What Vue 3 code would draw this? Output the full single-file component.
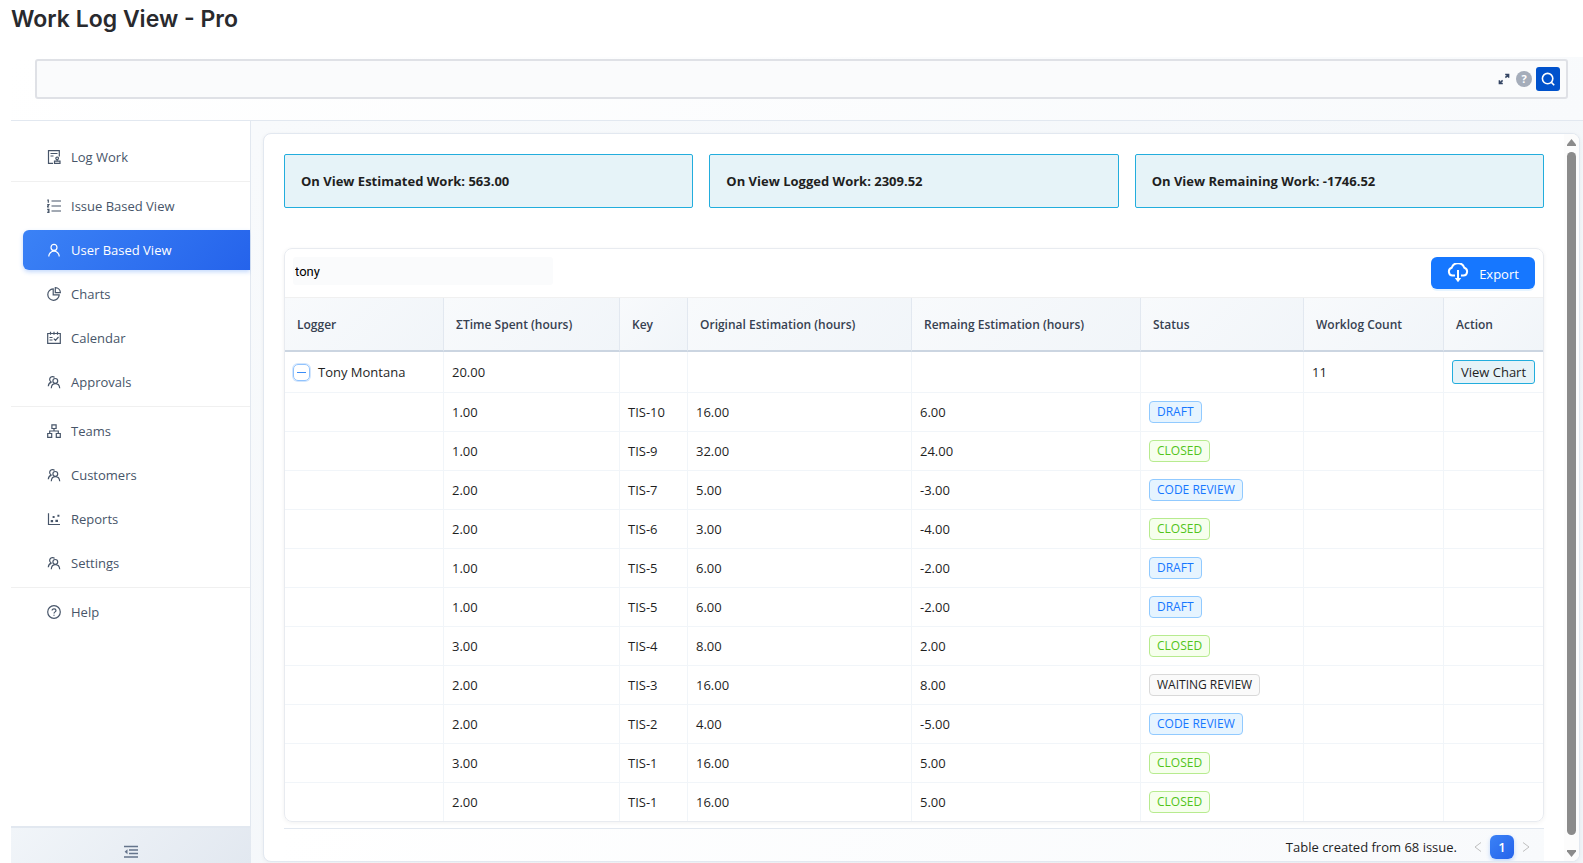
<template>
  <div class="page">
    <h1>Work Log View - Pro</h1>

    <header class="topbar">
      <div class="query">
        <input v-model="query" class="query-input" type="text" aria-label="Query" />
        <button class="query-expand" aria-label="Expand">
          <svg viewBox="0 0 12 12" width="12" height="12">
            <path d="M7.4 4.6 10 2M7.2 1.4h3.4v3.4M4.6 7.4 2 10M1.4 7.2v3.4h3.4" />
          </svg>
        </button>
        <a class="query-help" href="#" aria-label="Syntax help">?</a>
        <button class="query-search" aria-label="Search">
          <svg viewBox="0 0 16 16" width="16" height="16">
            <circle cx="7.6" cy="7.6" r="5.2" />
            <path d="m11.4 11.4 2.8 2.8" />
          </svg>
        </button>
      </div>
    </header>

    <div class="body">
      <aside class="sidebar">
        <nav class="menu">
          <div v-for="(group, g) in menu" :key="g" class="menu-group">
            <a
              v-for="item in group"
              :key="item.label"
              href="#"
              class="menu-item"
              :class="{ active: item.label === active }"
              @click.prevent="active = item.label"
            >
              <svg class="icon" viewBox="0 0 14 14" width="14" height="14">
                <path :d="icons[item.icon]" />
              </svg>
              <span>{{ item.label }}</span>
            </a>
          </div>
        </nav>
        <button class="collapse" aria-label="Collapse menu">
          <svg viewBox="0 0 14 14" width="14" height="14">
            <path d="M0 1.5h14M5 5h9M5 8.5h9M0 12h14" />
            <path class="solid" d="M3.5 4.3v5L.6 6.8z" />
          </svg>
        </button>
      </aside>

      <main class="content">
        <section class="panel">
          <div class="panel-main">
            <div class="stats">
              <div v-for="stat in stats" :key="stat.label" class="stat">{{ stat.label }}: {{ stat.value }}</div>
            </div>

            <div class="table-box">
              <div class="table-title">
                <input v-model="search" class="filter" type="text" aria-label="Filter loggers" />
                <button class="export">
                  <svg viewBox="0 0 22 20" width="22" height="20">
                    <path d="M8 12.6H5.6a4 4 0 0 1-.9-7.8 6.6 6.6 0 0 1 12.6 0 4 4 0 0 1-.9 7.8H14" />
                    <path d="M11 7v9" />
                    <path class="solid" d="M7.8 15h6.4L11 19.2z" />
                  </svg>
                  <span>Export</span>
                </button>
              </div>

              <table>
                <colgroup>
                  <col class="col-logger" />
                  <col class="col-spent" />
                  <col class="col-key" />
                  <col class="col-original" />
                  <col class="col-remaining" />
                  <col class="col-status" />
                  <col class="col-count" />
                  <col class="col-action" />
                </colgroup>
                <thead>
                  <tr>
                    <th v-for="column in columns" :key="column">{{ column }}</th>
                  </tr>
                </thead>
                <tbody>
                  <tr class="parent">
                    <td>
                      <div class="logger">
                        <button class="toggle" aria-label="Toggle rows" @click="expanded = !expanded"></button>
                        <span>Tony Montana</span>
                      </div>
                    </td>
                    <td>20.00</td>
                    <td></td>
                    <td></td>
                    <td></td>
                    <td></td>
                    <td>11</td>
                    <td><button class="view-chart">View Chart</button></td>
                  </tr>
                  <template v-if="expanded">
                    <tr v-for="(row, i) in rows" :key="i">
                      <td></td>
                      <td>{{ row.spent }}</td>
                      <td>{{ row.key }}</td>
                      <td>{{ row.original }}</td>
                      <td>{{ row.remaining }}</td>
                      <td><span class="tag" :class="tagColors[row.status]">{{ row.status }}</span></td>
                      <td></td>
                      <td></td>
                    </tr>
                  </template>
                </tbody>
              </table>
            </div>

            <footer class="pagination">
              <span>Table created from 68 issue.</span>
              <div class="pager">
                <button class="arrow" aria-label="Previous page">
                  <svg viewBox="0 0 10 12" width="10" height="12"><path d="M8 1.5 2 6l6 4.5" /></svg>
                </button>
                <button class="current">1</button>
                <button class="arrow" aria-label="Next page">
                  <svg viewBox="0 0 10 12" width="10" height="12"><path d="m2 1.5 6 4.5-6 4.5" /></svg>
                </button>
              </div>
            </footer>
          </div>

          <div class="scrollbar">
            <svg viewBox="0 0 9 7" width="9" height="7"><path d="M4.5 0 9 5.5V7H0V5.5z" /></svg>
            <div class="thumb"></div>
            <svg viewBox="0 0 9 7" width="9" height="7"><path d="M0 0h9v1.5L4.5 7 0 1.5z" /></svg>
          </div>
        </section>
      </main>
    </div>
  </div>
</template>

<script setup>
import { ref } from "vue";

const query = ref("");
const search = ref("tony");
const active = ref("User Based View");
const expanded = ref(true);

const menu = [
  [{ label: "Log Work", icon: "audit" }],
  [
    { label: "Issue Based View", icon: "list" },
    { label: "User Based View", icon: "user" },
    { label: "Charts", icon: "pie" },
    { label: "Calendar", icon: "schedule" },
    { label: "Approvals", icon: "team" },
  ],
  [
    { label: "Teams", icon: "apartment" },
    { label: "Customers", icon: "team" },
    { label: "Reports", icon: "dots" },
    { label: "Settings", icon: "team" },
  ],
  [{ label: "Help", icon: "question" }],
];

const icons = {
  audit:
    "M6 13.3H1.5V.7h10.8v5.8M3.5 3.5h7M3.5 6h3M7.5 13.3H13v-2.1H7.5zM10.2 11V9.5M10.2 9.6a1.3 1.3 0 1 0-.1 0",
  list: "M4.5 2H14M4.5 7H14M4.5 12H14M.3 1.2h1v2.6M.2 5.6h1.7L.3 8h1.8M.2 10.3h1.7v3H.2M.7 11.8h1.2",
  user: "M7 7.4a3 3 0 1 0 0-6 3 3 0 0 0 0 6M1.8 13.4a5.2 5.2 0 0 1 10.4 0",
  pie: "M6.2 1.9a5.7 5.7 0 1 0 6 6h-6zM8.3.6v5.1h5.1A5.2 5.2 0 0 0 8.3.6z",
  schedule: "M.7 2.5h12.6v9.8H.7zM3.5.8v3M7 .8v3M10.5.8v3M2.5 6.5h3M2.5 9h3M6.8 7.6l1.7 1.8 3-3.4",
  team: "M8.3 8.3a2.4 2.4 0 1 0 0-4.8 2.4 2.4 0 0 0 0 4.8M4.3 13.3c.2-6.3 8-6.3 8.4 0M4.6 7.2A2.9 2.9 0 1 1 7.6 2.4M1.3 11.2c.1-2 1.2-3.5 3.3-4",
  apartment: "M4.9.8h4.2v3.7H4.9zM.7 9.5h4v3.8h-4zM9.3 9.5h4v3.8h-4zM7 4.5V7M2.7 9.5V7h8.6v2.5",
  dots: "M1.5 1.2v11.3H13M4.3 8.5h1.2v1.2H4.3zM6.2 4.5H7v.8h-.8zM9 8.3h1.4v1.2H9zM11 3.4h.8v.8H11z",
  question: "M7 13.3A6.3 6.3 0 1 0 7 .7a6.3 6.3 0 0 0 0 12.6M5.1 5.6c0-2.4 3.9-2.3 3.9 0 0 1.3-2 1.3-2 2.9M7 9.8v1",
};

const stats = [
  { label: "On View Estimated Work", value: "563.00" },
  { label: "On View Logged Work", value: "2309.52" },
  { label: "On View Remaining Work", value: "-1746.52" },
];

const columns = [
  "Logger",
  "ΣTime Spent (hours)",
  "Key",
  "Original Estimation (hours)",
  "Remaing Estimation (hours)",
  "Status",
  "Worklog Count",
  "Action",
];

const rows = [
  { spent: "1.00", key: "TIS-10", original: "16.00", remaining: "6.00", status: "DRAFT" },
  { spent: "1.00", key: "TIS-9", original: "32.00", remaining: "24.00", status: "CLOSED" },
  { spent: "2.00", key: "TIS-7", original: "5.00", remaining: "-3.00", status: "CODE REVIEW" },
  { spent: "2.00", key: "TIS-6", original: "3.00", remaining: "-4.00", status: "CLOSED" },
  { spent: "1.00", key: "TIS-5", original: "6.00", remaining: "-2.00", status: "DRAFT" },
  { spent: "1.00", key: "TIS-5", original: "6.00", remaining: "-2.00", status: "DRAFT" },
  { spent: "3.00", key: "TIS-4", original: "8.00", remaining: "2.00", status: "CLOSED" },
  { spent: "2.00", key: "TIS-3", original: "16.00", remaining: "8.00", status: "WAITING REVIEW" },
  { spent: "2.00", key: "TIS-2", original: "4.00", remaining: "-5.00", status: "CODE REVIEW" },
  { spent: "3.00", key: "TIS-1", original: "16.00", remaining: "5.00", status: "CLOSED" },
  { spent: "2.00", key: "TIS-1", original: "16.00", remaining: "5.00", status: "CLOSED" },
];

const tagColors = {
  DRAFT: "blue",
  "CODE REVIEW": "blue",
  CLOSED: "green",
  "WAITING REVIEW": "gray",
};
</script>

<style>
body {
  margin: 0;
  background: #fff;
}
</style>

<style scoped>
* {
  box-sizing: border-box;
}

.page {
  display: flex;
  flex-direction: column;
  height: 100vh;
  padding-left: 11px;
  overflow: hidden;
  font-family: "Segoe UI", "Open Sans", "Noto Sans", sans-serif;
  font-size: 13px;
  line-height: 22px;
  color: #1f1f1f;
}

h1 {
  margin: 0;
  padding: 5px 0 24px;
  font-family: Inter, sans-serif;
  font-size: 23px;
  font-weight: 600;
  line-height: 28px;
  color: #292a2e;
}

button {
  display: flex;
  align-items: center;
  justify-content: center;
  padding: 0;
  border: none;
  background: none;
  font: inherit;
  cursor: pointer;
}

svg {
  display: block;
  flex: none;
  fill: none;
  stroke: currentColor;
}

svg .solid {
  fill: currentColor;
  stroke: none;
}

/* Query bar */
.topbar {
  flex: none;
  padding: 2px 15px 21px 24px;
  border-bottom: 1px solid #e2e8f0;
  background: linear-gradient(135deg, #fff 0%, #f8fafc 100%);
}

.query {
  display: flex;
  align-items: center;
  height: 40px;
  padding: 0 6px;
  border: 2px solid #dfe1e6;
  border-radius: 3px;
  background: #fafbfc;
}

.query-input {
  flex: 1;
  height: 32px;
  border: none;
  outline: none;
  background: transparent;
  font: inherit;
}

.query-expand {
  margin-right: 6px;
  color: #344563;
}

.query-expand svg {
  stroke-width: 1.5;
}

.query-help {
  width: 16px;
  height: 16px;
  margin-right: 4px;
  border-radius: 50%;
  background: #a5adba;
  color: #fff;
  font-size: 11px;
  font-weight: 700;
  line-height: 16px;
  text-align: center;
  text-decoration: none;
}

.query-search {
  width: 24px;
  height: 24px;
  border-radius: 3px;
  background: #0052cc;
  color: #fff;
}

.query-search svg {
  stroke-width: 1.6;
}

.body {
  display: flex;
  flex: 1;
  min-height: 0;
}

/* Sidebar */
.sidebar {
  display: flex;
  flex-direction: column;
  flex: none;
  width: 240px;
}

.menu {
  flex: 1;
  padding-top: 12px;
  border-right: 1px solid #e2e8f0;
}

.menu-group {
  display: flex;
  flex-direction: column;
  gap: 4px;
  padding: 4px 0 4px 12px;
}

.menu-group + .menu-group {
  border-top: 1px solid #f0f0f0;
}

.menu-item {
  display: flex;
  align-items: center;
  gap: 10px;
  height: 40px;
  padding-left: 24px;
  border-radius: 6px 0 0 6px;
  color: #475569;
  text-decoration: none;
}

.menu-item.active {
  background: linear-gradient(135deg, #3b82f6 0%, #2563eb 100%);
  box-shadow: 0 2px 4px rgba(59, 130, 246, 0.3);
  color: #fff;
}

.icon {
  stroke-width: 1.2;
}

.collapse {
  flex: none;
  align-items: flex-start;
  height: 37px;
  padding-top: 17px;
  border-top: 2px solid #e2e8f0;
  background: linear-gradient(135deg, #f1f5f9 0%, #e2e8f0 100%);
  color: #64748b;
}

.collapse svg {
  stroke-width: 1.4;
}

/* Content */
.content {
  flex: 1;
  min-width: 0;
  padding: 12px 3px 1px 12px;
  background: linear-gradient(135deg, #f8fafc 0%, #f1f5f9 100%);
}

.panel {
  display: flex;
  height: 100%;
  border: 1px solid #e2e8f0;
  border-radius: 8px;
  background: #fff;
  box-shadow: 0 1px 4px rgba(0, 0, 0, 0.05);
  overflow: hidden;
}

.panel-main {
  display: flex;
  flex-direction: column;
  flex: 1;
  min-width: 0;
  padding: 20px 20px 0;
}

.stats {
  display: grid;
  grid-template-columns: repeat(3, 1fr);
  gap: 16px;
  margin-bottom: 40px;
}

.stat {
  height: 54px;
  padding-left: 16px;
  border: 1px solid #22addd;
  border-radius: 2px;
  background: #e6f3f8;
  font-weight: 700;
  line-height: 52px;
}

.table-box {
  flex: none;
  border: 1px solid #e8ebf0;
  border-radius: 8px;
  box-shadow: 0 1px 4px rgba(0, 0, 0, 0.06);
  overflow: hidden;
}

.table-title {
  display: flex;
  justify-content: space-between;
  align-items: flex-start;
  height: 49px;
  padding: 8px;
  border-bottom: 1px solid #f0f0f0;
}

.filter {
  width: 260px;
  height: 28px;
  padding: 0 2px;
  border: none;
  border-radius: 3px;
  outline: none;
  background: #fafbfc;
  color: #000;
  font-family: Roboto, sans-serif;
  font-size: 13px;
}

.export {
  gap: 10px;
  width: 104px;
  height: 32px;
  border-radius: 6px;
  background: #1677ff;
  box-shadow: 0 2px 0 rgba(5, 145, 255, 0.1);
  color: #fff;
}

.export svg {
  stroke-width: 2;
}

.export span {
  padding-top: 2px;
}

/* Table */
table {
  width: 100%;
  table-layout: fixed;
  border-collapse: separate;
  border-spacing: 0;
}

.col-logger {
  width: 159px;
}

.col-spent {
  width: 176px;
}

.col-key {
  width: 68px;
}

.col-original {
  width: 224px;
}

.col-remaining {
  width: 229px;
}

.col-status {
  width: 163px;
}

.col-count {
  width: 140px;
}

.col-action {
  width: 99px;
}

th {
  height: 54px;
  padding: 2px 12px 0;
  border-right: 1px solid #e2e8f0;
  border-bottom: 2px solid #cbd5e1;
  background: linear-gradient(135deg, #f8fafc 0%, #f1f5f9 100%);
  color: #374151;
  font-size: 12px;
  font-weight: 600;
  text-align: left;
  white-space: nowrap;
}

td {
  height: 39px;
  padding: 0 8px 1px;
  border-right: 1px solid #f1f5f9;
  border-bottom: 1px solid #f1f5f9;
  white-space: nowrap;
}

th:last-child,
td:last-child {
  border-right: none;
}

tr:last-child td {
  height: 38px;
  border-bottom: none;
}

.parent td,
.parent:last-child td {
  height: 41px;
  padding-bottom: 0;
}

.logger {
  display: flex;
  align-items: center;
  gap: 8px;
}

.toggle {
  width: 17px;
  height: 17px;
  border: 1px solid #91c3fd;
  border-radius: 5px;
  box-shadow: 0 0 0 1px #d3e6fd;
}

.toggle::before {
  content: "";
  width: 9px;
  height: 1px;
  background: #3b8cf6;
}

.view-chart {
  width: 83px;
  height: 24px;
  border: 1px solid #22addd;
  border-radius: 3px;
  background: #e6f3f8;
  color: #1f1f1f;
}

.tag {
  display: block;
  width: max-content;
  padding: 0 7px;
  border: 1px solid;
  border-radius: 4px;
  font-size: 12px;
  line-height: 20px;
}

.blue {
  border-color: #91caff;
  background: #e6f4ff;
  color: #1677ff;
}

.green {
  border-color: #b7eb8f;
  background: #f6ffed;
  color: #52c41a;
}

.gray {
  border-color: #d9d9d9;
  background: #fafafa;
  color: #1f1f1f;
}

/* Footer */
.pagination {
  display: flex;
  align-items: center;
  justify-content: flex-end;
  gap: 16px;
  flex: 1;
  margin-top: 6px;
  padding: 4px 13px 0 0;
  border-top: 1px solid #e2e8f0;
  background: linear-gradient(135deg, #fff 0%, #f8fafc 100%);
}

.pager {
  display: flex;
  align-items: center;
  gap: 7px;
}

.arrow {
  color: #bfbfbf;
}

.current {
  width: 24px;
  height: 24px;
  border-radius: 6px;
  background: linear-gradient(135deg, #3b82f6 0%, #2563eb 100%);
  box-shadow: 0 2px 4px rgba(59, 130, 246, 0.3);
  color: #fff;
  font-weight: 600;
}

/* Scrollbar */
.scrollbar {
  display: flex;
  flex-direction: column;
  align-items: center;
  gap: 6px;
  flex: none;
  width: 15px;
  padding: 5px 0 4px;
  background: #fcfcfc;
  color: #8b8b8b;
}

.scrollbar svg {
  fill: currentColor;
  stroke: none;
}

.thumb {
  flex: 1;
  width: 9px;
  margin-bottom: 9px;
  border-radius: 5px;
  background: #8b8b8b;
}
</style>
